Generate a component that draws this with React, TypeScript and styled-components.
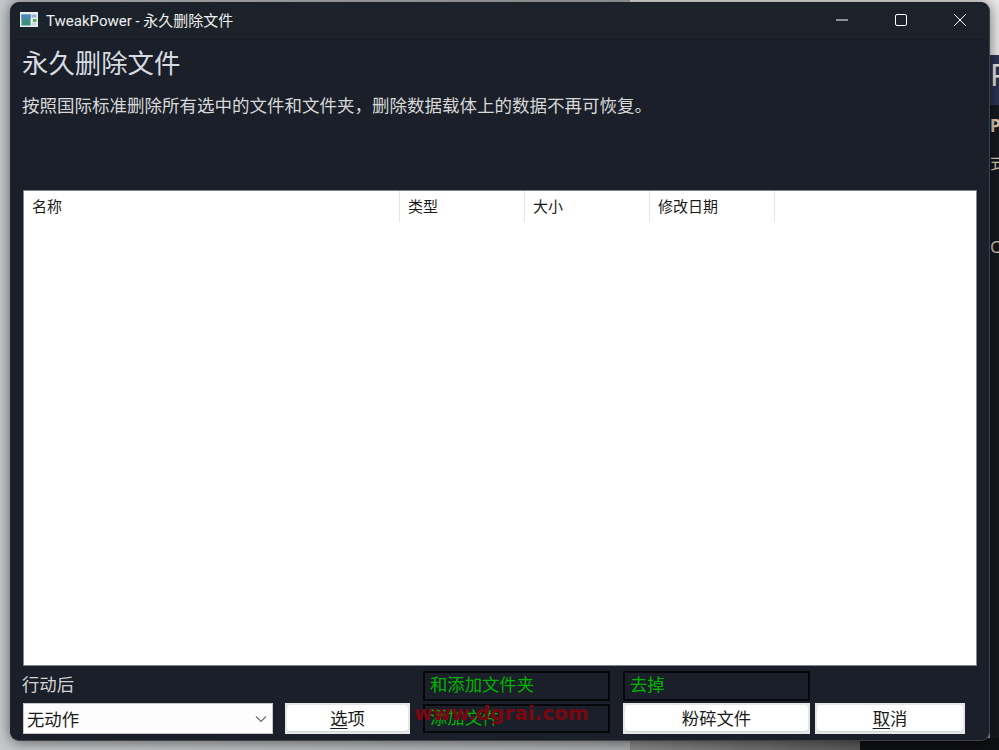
import React from "react";
import styled, { createGlobalStyle } from "styled-components";

const cjk = `"Noto Sans", "Noto Sans CJK SC", sans-serif`;

const columns = [
  { name: "名称", width: 376 },
  { name: "类型", width: 125 },
  { name: "大小", width: 125 },
  { name: "修改日期", width: 125 },
];

const App = () => {
  return (
    <Desktop>
      <GlobalStyle />
      <TopStrip />
      <SidePanel>
        <SideBanner>Pc</SideBanner>
        <SideLetter>P</SideLetter>
        <SideSmall>式</SideSmall>
        <SideSmall>C</SideSmall>
      </SidePanel>
      <BottomGrey />
      <BottomDark />

      <Window>
        <TitleBar>
          <TitleLeft>
            <AppIcon viewBox="0 0 18 15">
              <rect width="18" height="15" fill="#e8eef0" />
              <rect x="1.5" y="2.5" width="9" height="11" fill="#3f8f7d" />
              <rect x="1.5" y="2.5" width="9" height="5" fill="#4f86b8" />
              <rect x="11.5" y="2.5" width="5" height="3" fill="#8fb6d8" />
              <rect x="13" y="7" width="3.5" height="3" fill="#5fae5a" />
              <rect x="11.5" y="11" width="5" height="2.5" fill="#c9d6dc" />
            </AppIcon>
            <TitleText>TweakPower - 永久删除文件</TitleText>
          </TitleLeft>
          <WindowButtons>
            <WindowButton>
              <svg width="12" height="12" viewBox="0 0 12 12">
                <path d="M0 6h12" stroke="#fff" strokeWidth="1" />
              </svg>
            </WindowButton>
            <WindowButton>
              <svg width="12" height="12" viewBox="0 0 12 12">
                <rect x="0.5" y="0.5" width="11" height="11" rx="1.5" fill="none" stroke="#fff" strokeWidth="1" />
              </svg>
            </WindowButton>
            <WindowButton>
              <svg width="12" height="12" viewBox="0 0 12 12">
                <path d="M0 0l12 12M12 0L0 12" stroke="#fff" strokeWidth="1" />
              </svg>
            </WindowButton>
          </WindowButtons>
        </TitleBar>

        <Body>
          <Heading>永久删除文件</Heading>
          <Description>
            按照国际标准删除所有选中的文件和文件夹，删除数据载体上的数据不再可恢复。
          </Description>

          <FileTable>
            <HeaderRow>
              {columns.map((col) => (
                <HeaderCell key={col.name} $width={col.width}>
                  {col.name}
                </HeaderCell>
              ))}
            </HeaderRow>
          </FileTable>

          <Footer>
            <ActionLabel>行动后</ActionLabel>
            <Spacer />
            <OutlinedLabel $width={187}>和添加文件夹</OutlinedLabel>
            <OutlinedLabel $width={187}>去掉</OutlinedLabel>
            <Spacer />

            <Combo>
              无动作
              <svg width="12" height="8" viewBox="0 0 12 8">
                <path d="M1 1.5l5 5 5-5" fill="none" stroke="#6d6d6d" strokeWidth="1.2" />
              </svg>
            </Combo>
            <PushButton $width={125}>
              <ButtonFace>
                <u>选</u>项
              </ButtonFace>
            </PushButton>
            <OutlinedLabel $width={187} $lower>
              添加文件
            </OutlinedLabel>
            <PushButton $width={187}>
              <ButtonFace>粉碎文件</ButtonFace>
            </PushButton>
            <PushButton $width={150}>
              <ButtonFace>
                <u>取</u>消
              </ButtonFace>
            </PushButton>
          </Footer>
        </Body>
      </Window>

      <Watermark>www.dgrai.com</Watermark>
    </Desktop>
  );
};

export default App;

const GlobalStyle = createGlobalStyle`
  html, body {
    margin: 0;
    padding: 0;
    background: #8a8a8a;
  }
`;

const Desktop = styled.div`
  position: relative;
  width: 999px;
  height: 750px;
  overflow: hidden;
  box-sizing: border-box;
  padding: 2px 0 0 10px;
  background: linear-gradient(90deg, #c6c9cc 0%, #9a9c9f 100%);
  font-family: ${cjk};
`;

const TopStrip = styled.div`
  position: absolute;
  left: 630px;
  top: 0;
  width: 369px;
  height: 55px;
  background: #e9e9e9;
`;

const SidePanel = styled.div`
  position: absolute;
  left: 990px;
  top: 55px;
  width: 9px;
  height: 695px;
  overflow: hidden;
  background: #15181f;
  color: #d9c9b8;
  font-size: 17px;
`;

const SideBanner = styled.div`
  height: 50px;
  background: #2a3350;
  color: #e8e4dc;
  font-size: 30px;
  line-height: 40px;
`;

const SideLetter = styled.div`
  font-weight: 700;
  height: 46px;
  line-height: 42px;
`;

const SideSmall = styled.div`
  height: 88px;
  line-height: 24px;
  &:last-child {
    margin-top: -4px;
  }
`;

const BottomGrey = styled.div`
  position: absolute;
  left: 630px;
  bottom: 0;
  width: 230px;
  height: 12px;
  background: linear-gradient(90deg, #8b8b8b, #5a5a5a);
`;

const BottomDark = styled.div`
  position: absolute;
  left: 860px;
  bottom: 0;
  width: 139px;
  height: 12px;
  background: #0f1014;
`;

const Window = styled.div`
  position: relative;
  box-sizing: border-box;
  width: 980px;
  height: 739px;
  border: 1px solid #3d4148;
  border-top-color: #1b2229;
  border-left-color: #1a1f29;
  border-radius: 9px;
  overflow: hidden;
  background: #1a1f29;
  box-shadow: 0 1px 14px rgba(0, 0, 0, 0.55);
  display: flex;
  flex-direction: column;
`;

const TitleBar = styled.div`
  box-sizing: border-box;
  height: 37px;
  padding-bottom: 3px;
  flex-shrink: 0;
  display: flex;
  align-items: center;
  justify-content: space-between;
  background: #1b2229;
  border-bottom: 1px solid #181d24;
`;

const TitleLeft = styled.div`
  display: flex;
  align-items: center;
  padding-left: 9px;
  gap: 8px;
`;

const TitleText = styled.span`
  color: #f0f0f0;
  font-family: Roboto, "Noto Sans CJK SC", sans-serif;
  font-size: 15px;
  white-space: nowrap;
`;

const AppIcon = styled.svg`
  width: 18px;
  height: 15px;
`;

const WindowButtons = styled.div`
  display: flex;
`;

const WindowButton = styled.div`
  width: 59px;
  height: 33px;
  display: flex;
  align-items: center;
  justify-content: center;
`;

const Body = styled.div`
  flex: 1;
  display: flex;
  flex-direction: column;
  padding: 0 12px;
`;

const Heading = styled.h1`
  margin: 5px 0 0 -1px;
  height: 36px;
  line-height: 36px;
  font-size: 26.4px;
  font-weight: 400;
  color: #d6dbe0;
`;

const Description = styled.p`
  margin: 12px 0 0 -1px;
  height: 24px;
  line-height: 24px;
  font-size: 17.5px;
  color: #d8d8d8;
  white-space: nowrap;
`;

const FileTable = styled.div`
  box-sizing: border-box;
  margin-top: 73px;
  height: 476px;
  border: 1px solid #80858d;
  background: #fff;
`;

const HeaderRow = styled.div`
  display: flex;
  height: 31px;
`;

const HeaderCell = styled.div<{ $width: number }>`
  box-sizing: border-box;
  width: ${({ $width }) => $width}px;
  padding-left: 8px;
  border-right: 1px solid #e5e5e5;
  line-height: 31px;
  font-size: 15px;
  color: #1a1a1a;
`;

const Footer = styled.div`
  display: grid;
  grid-template-columns: 262px 138px 200px 192px 150px;
  grid-template-rows: 31px 32px;
  margin-top: 5px;
  font-size: 17.33px;
`;

const Spacer = styled.div``;

const ActionLabel = styled.div`
  margin-left: -1px;
  line-height: 26px;
  color: #d4d4d4;
`;

const OutlinedLabel = styled.div<{ $width: number; $lower?: boolean }>`
  box-sizing: border-box;
  width: ${({ $width }) => $width}px;
  height: ${({ $lower }) => ($lower ? 29 : 30)}px;
  margin-top: ${({ $lower }) => ($lower ? 2 : 0)}px;
  padding-left: 5px;
  border: 2px solid #05070a;
  line-height: 23px;
  color: #00b400;
`;

const Combo = styled.div`
  box-sizing: border-box;
  width: 250px;
  height: 31px;
  margin-top: 1px;
  padding: 0 5px 0 3px;
  display: flex;
  align-items: center;
  justify-content: space-between;
  background: #fdfdfd;
  border: 1px solid #c8c8c8;
  color: #1a1a1a;
`;

const PushButton = styled.div<{ $width: number }>`
  box-sizing: border-box;
  width: ${({ $width }) => $width}px;
  height: 31px;
  margin-top: 1px;
  padding: 2px;
  background: #e6e6e6;
`;

const ButtonFace = styled.div`
  box-sizing: border-box;
  height: 100%;
  padding-top: 2px;
  background: #fff;
  border-radius: 4px;
  border-bottom: 1px solid #d4d4d4;
  display: flex;
  align-items: center;
  justify-content: center;
  color: #1a1a1a;
  line-height: 1;
  u {
    text-underline-offset: 3px;
    text-decoration-thickness: 1px;
  }
`;

const Watermark = styled.div`
  position: absolute;
  left: 414px;
  top: 700px;
  font-family: "DejaVu Sans", sans-serif;
  font-size: 20px;
  font-weight: 700;
  line-height: 26px;
  color: #7c0610;
  white-space: nowrap;
`;
